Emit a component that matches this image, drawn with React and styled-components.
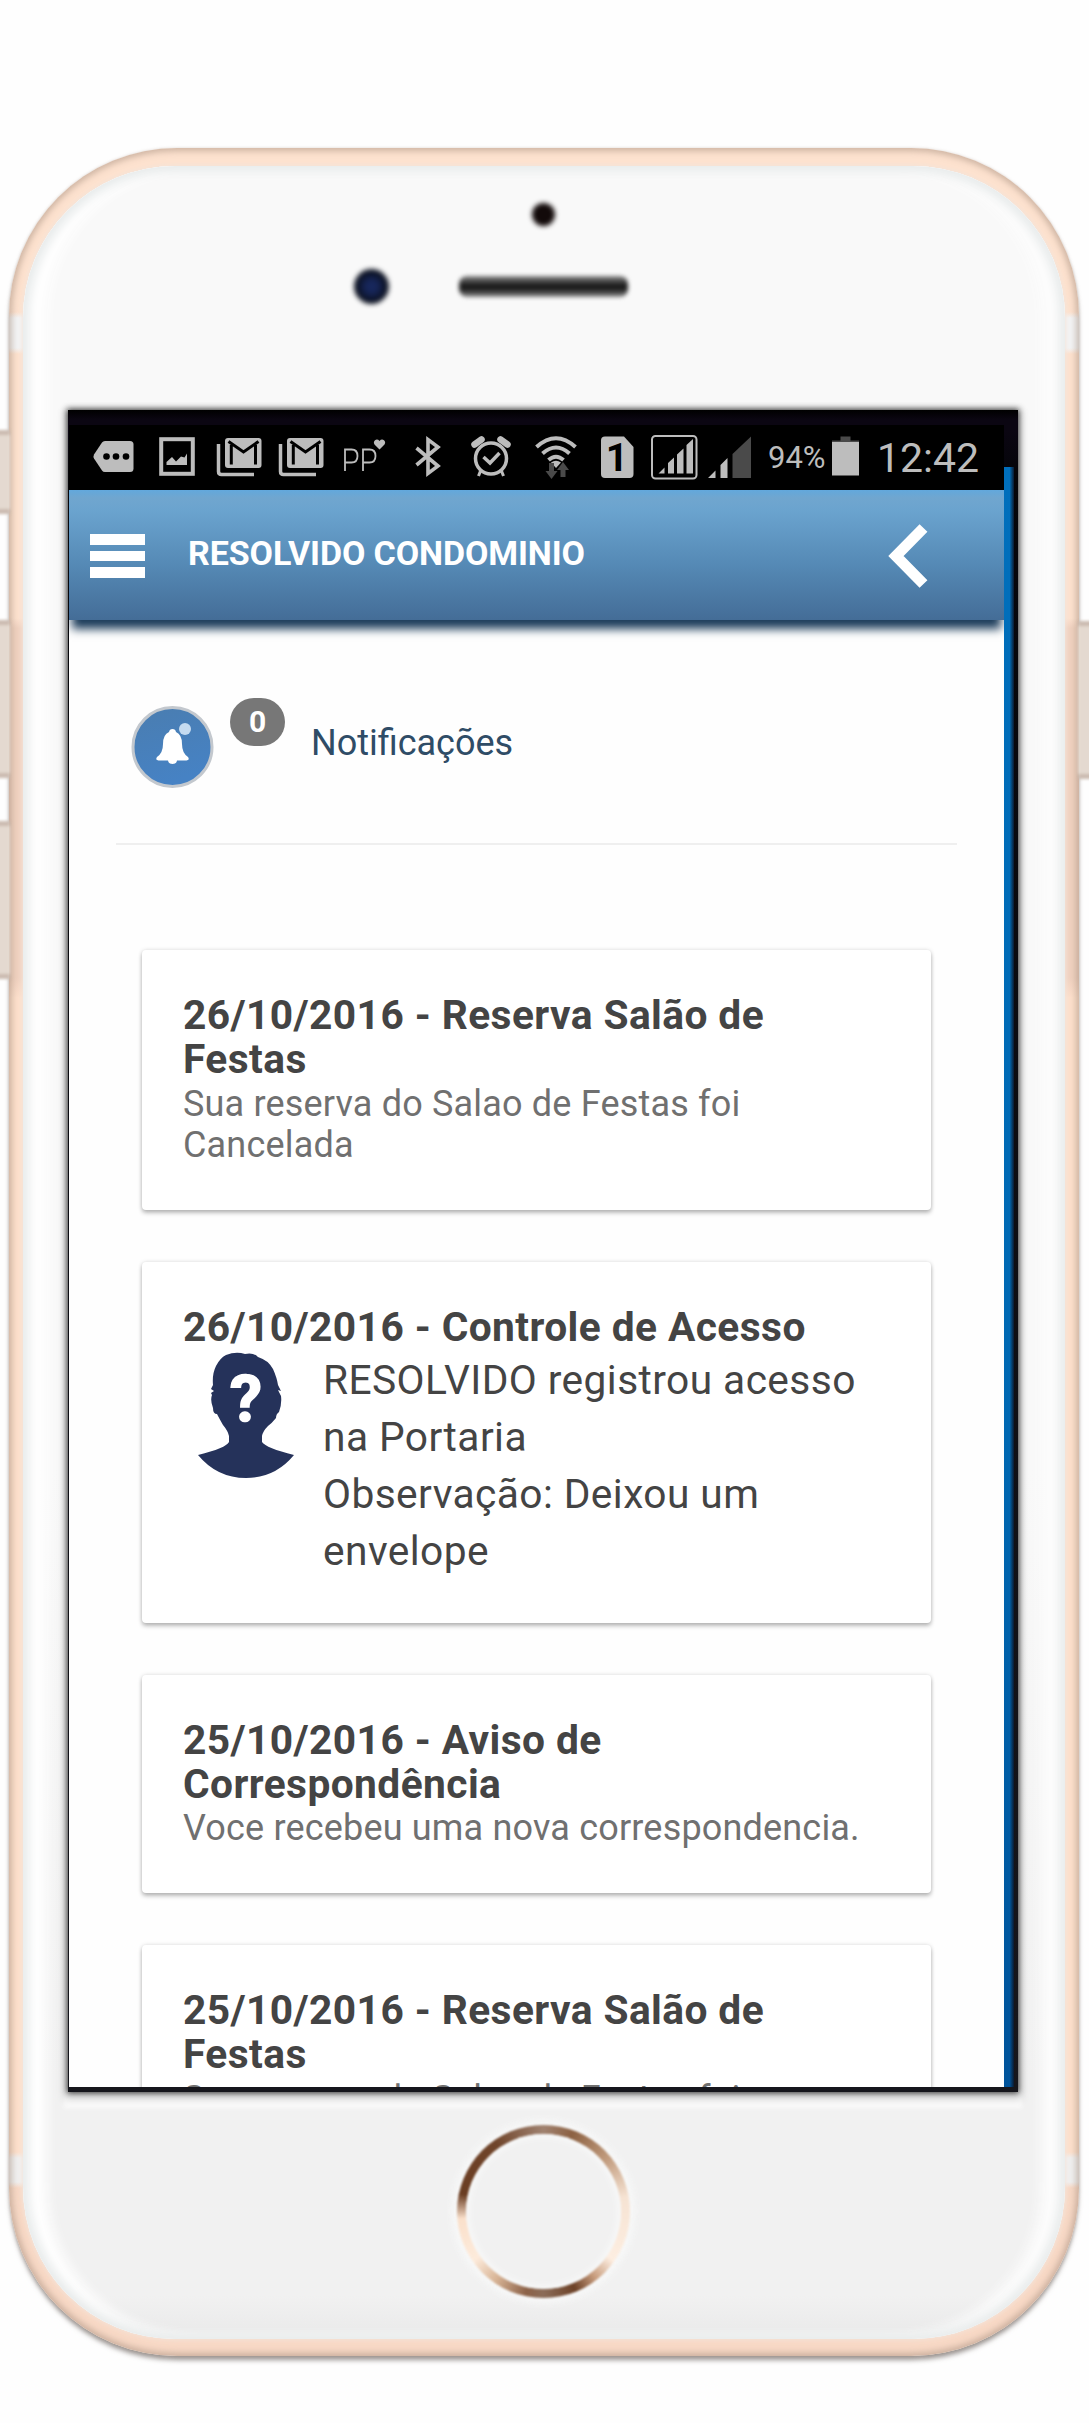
import React from "react";
import styled, { createGlobalStyle } from "styled-components";

const GlobalStyle = createGlobalStyle`
  body {
    margin: 0;
    background: #fefefe;
    font-family: Roboto, "Noto Sans", sans-serif;
  }
`;

const Page = styled.main`
  box-sizing: border-box;
  width: 1089px;
  height: 2423px;
  padding: 148px 0 0 9px;
  overflow: hidden;
`;

/* ---------- phone body ---------- */

const Shell = styled.div`
  position: relative;
  box-sizing: border-box;
  width: 1070px;
  height: 2208px;
  padding: 18px 14px 17px;
  border-radius: 168px;
  background: linear-gradient(
    #fde2cf 0 164px,
    #f3f4f5 170px 200px,
    #fde2cf 206px 470px,
    #f0d2c0 480px 830px,
    #fde0cc 850px 2004px,
    #f0f0f0 2010px 2034px,
    #f8d9c6 2040px
  );
  box-shadow:
    inset 0 0 6px 3px rgba(160, 135, 120, 0.5),
    0 0 3px rgba(170, 150, 138, 0.4),
    0 5px 5px -1px rgba(90, 80, 75, 0.6);
`;

const SideButton = styled.span`
  position: absolute;
  top: ${(p) => p.$top}px;
  ${(p) => (p.$right ? "right" : "left")}: -14px;
  width: 15px;
  height: ${(p) => p.$height}px;
  box-sizing: border-box;
  background: #e4d9d0;
  border: solid #cbbbb0;
  border-width: 5px 0;
  filter: blur(1.5px);
`;

const Face = styled.div`
  display: flex;
  flex-direction: column;
  height: 100%;
  border-radius: 152px;
  background: linear-gradient(#f9f9f9 0 60%, #f1f1f1 88% 98%, #e9e9e9);
  box-shadow:
    0 0 4px 1px #f3e4da,
    inset 0 0 8px 6px #e9ecec,
    inset 22px 0 12px 2px #fefefe,
    inset -22px 0 12px 2px #fcfcfc;
`;

const TopBezel = styled.div`
  display: flex;
  flex-direction: column;
  align-items: center;
  height: 244px;
  padding-right: 2px;
`;

const Sensor = styled.span`
  width: 23px;
  height: 23px;
  margin-top: 37px;
  border-radius: 50%;
  background: #120a0a;
  filter: blur(2.5px);
`;

const SpeakerRow = styled.div`
  display: flex;
  align-items: center;
  gap: 70px;
  width: 540px;
  margin-top: 43px;
`;

const Lens = styled.span`
  width: 35px;
  height: 35px;
  margin-left: 81px;
  border-radius: 50%;
  background: radial-gradient(circle, #17275c 0 20%, #0a0f1c 65%, #333 100%);
  filter: blur(2.5px);
`;

const Speaker = styled.span`
  width: 169px;
  height: 21px;
  border-radius: 8px;
  background: linear-gradient(#888, #1a1a1a 45% 60%, #888);
  filter: blur(2px);
`;

const BottomBezel = styled.div`
  display: flex;
  justify-content: center;
  padding: 33px 2px 0 0;
`;

const HomeButton = styled.div`
  width: 173px;
  height: 173px;
  border-radius: 50%;
  background: conic-gradient(
    #a08270 0deg,
    #8c6142 20deg,
    #c19b7d 50deg,
    #f6e3d3 80deg,
    #fdeee1 125deg,
    #c89d7e 142deg,
    #6c4127 158deg,
    #8b6c58 180deg,
    #8c6248 192deg,
    #d8b496 215deg,
    #fdebdb 235deg,
    #fae0cb 265deg,
    #6a3d22 282deg,
    #70452b 325deg,
    #a08270 360deg
  );
  box-shadow: 0 0 8px 4px #f9fafa;
  filter: blur(1.2px);
`;

const HomeWell = styled.div`
  width: 155px;
  height: 155px;
  margin: 9px;
  border-radius: 50%;
  background: #f1f1f1;
  box-shadow: inset 0 0 6px 3px #f8f9f9;
`;

/* ---------- display ---------- */

const Display = styled.div`
  display: flex;
  align-items: flex-start;
  box-sizing: border-box;
  width: 950px;
  height: 1682px;
  margin-left: 45px;
  padding: 15px 0 0 1px;
  background: linear-gradient(#000, #0b0612 10px, #0b0612 20px, #05050a 60px, #16161c);
  box-shadow:
    0 0 6px 1px rgba(20, 20, 20, 0.85),
    0 4px 8px 4px rgba(0, 0, 0, 0.12),
    0 12px 4px 4px #fbfbfb;
`;

const Viewport = styled.div`
  display: flex;
  flex-direction: column;
  width: 935px;
  height: 1662px;
  overflow: hidden;
  background: #fefefe;
`;

const EdgeStripe = styled.span`
  width: 10px;
  height: 1620px;
  margin-top: 42px;
  background: linear-gradient(90deg, transparent 55%, #0a1a30), linear-gradient(#006fbc, #0068b2 60%, #00539a);
`;

const StatusBar = styled.div`
  display: flex;
  align-items: center;
  flex: none;
  height: 65px;
  background: #000;
  color: #bdbdbd;
`;

const StatusIcon = styled.svg`
  flex: none;
  display: block;
  width: ${(p) => p.$w}px;
  height: 46px;
  margin-left: ${(p) => p.$gap}px;
  overflow: visible;
`;

const StatusText = styled.span`
  flex: none;
  width: ${(p) => p.$w}px;
  margin-left: ${(p) => p.$gap}px;
  font-size: ${(p) => p.$size}px;
  line-height: 46px;
  white-space: nowrap;
`;

const Header = styled.header`
  position: relative;
  display: flex;
  align-items: center;
  flex: none;
  box-sizing: border-box;
  height: 130px;
  padding: 2px 76px 0 21px;
  background: linear-gradient(#62a8dc 0, #70a6cf 8px, #6aa3ce 22px, #5589b5 75px, #446d97);
  box-shadow: 0 12px 9px -3px #1d3d5b;
`;

const MenuButton = styled.button`
  display: flex;
  flex-direction: column;
  gap: 6px;
  width: 55px;
  padding: 0;
  border: 0;
  background: none;
`;

const MenuBar = styled.span`
  height: 10.5px;
  background: #fff;
`;

const AppTitle = styled.h1`
  flex: 1;
  margin: -7px 0 0 43px;
  color: #fff;
  font-size: 34px;
  font-weight: 700;
  line-height: 44px;
  letter-spacing: -0.1px;
  white-space: nowrap;
`;

const BackIcon = styled.svg`
  display: block;
  width: 40px;
  height: 66px;
`;

const Content = styled.section`
  display: flex;
  flex-direction: column;
  padding: 0 47px;
`;

const Notifications = styled.div`
  display: flex;
  align-items: flex-start;
  box-sizing: border-box;
  height: 225px;
  padding: 78px 0 0 15px;
  border-bottom: 2px solid #efefef;
`;

const BellIcon = styled.svg`
  width: 84px;
  height: 84px;
  margin-top: 7px;
`;

const Badge = styled.span`
  width: 55px;
  height: 48px;
  margin-left: 15px;
  border-radius: 24px;
  background: #777;
  color: #fff;
  font-size: 30px;
  font-weight: 700;
  line-height: 47px;
  text-align: center;
`;

const SectionName = styled.span`
  margin: 23px 0 0 26px;
  color: #2f4c66;
  font-size: 36px;
  line-height: 44px;
`;

const CardList = styled.div`
  display: flex;
  flex-direction: column;
  gap: 52px;
  padding: 105px 26px 0;
`;

const Card = styled.article`
  box-sizing: border-box;
  padding: 43px 42px 43px 41px;
  border-radius: 4px;
  background: #fff;
  box-shadow:
    0 3px 4px rgba(0, 0, 0, 0.25),
    0 0 4px rgba(0, 0, 0, 0.13);
`;

const CardTitle = styled.h2`
  margin: 0;
  color: #444;
  font-size: 40.7px;
  font-weight: 700;
  line-height: 44px;
  letter-spacing: 0.42px;
`;

const CardText = styled.p`
  margin: 2.500px 0 0;
  color: #707070;
  font-size: 36px;
  line-height: 41.7px;
  letter-spacing: 0.18px;
`;

const AccessRow = styled.div`
  display: flex;
  padding-top: 3px;
`;

const Avatar = styled.svg`
  flex: none;
  width: 96px;
  height: 127px;
  margin: 0 29px 0 15px;
`;

const AccessText = styled.p`
  margin: 0;
  color: #444;
  font-size: 40.7px;
  line-height: 57px;
  letter-spacing: 0.42px;
  white-space: nowrap;
`;

const GREY = "#bdbdbd";

function MailStackIcon({ gap }) {
  return (
    <StatusIcon $w={45} $gap={gap} viewBox="0 0 45 46">
      <path d="M1.500 9v27.500q0 3 3 3H37" fill="none" stroke={GREY} strokeWidth="3.500" />
      <rect x="8" y="3" width="36.500" height="30" rx="3" fill={GREY} />
      <path d="M11.500 6.500l15 10.500 15-10.500M14.300 10v19.500M38.500 10v19.500" fill="none" stroke="#000" strokeWidth="3" />
    </StatusIcon>
  );
}

function StatusIcons() {
  return (
    <>
      <StatusIcon $w={41} $gap={24} viewBox="0 0 41 46">
        <path d="M12 6h25q3.500 0 3.500 3.500v24q0 3.500-3.500 3.500H12q-2 0-3-1.500L1 23.500q-1-2 0-4L9 7.500Q10 6 12 6z" fill={GREY} />
        <circle cx="13.500" cy="21.500" r="3.300" />
        <circle cx="23" cy="21.500" r="3.300" />
        <circle cx="33" cy="21.500" r="3.300" />
      </StatusIcon>
      <StatusIcon $w={36} $gap={25} viewBox="0 0 36 46">
        <rect x="2.200" y="4.200" width="31.600" height="34.600" fill="none" stroke={GREY} strokeWidth="4" />
        <path d="M7.500 30v-3l5.500-5 4 4.500 5-5 3.500 1 2.500-4V30z" fill={GREY} />
      </StatusIcon>
      <MailStackIcon gap={22} />
      <MailStackIcon gap={17} />
      <StatusIcon $w={43} $gap={19} viewBox="0 0 43 46">
        <path
          d="M2 36V14.500h6.500q6 0 6 6.500t-6 6.500H2M20 36V14.500h6.500q6 0 6 6.500t-6 6.500H20"
          fill="none"
          stroke={GREY}
          strokeWidth="1.800"
        />
        <path d="M36.500 14.500l-5-5q-1.500-2.500.500-4.300 2.500-1.500 4.500.8 2-2.300 4.500-.8 2 1.800.5 4.300z" fill={GREY} />
      </StatusIcon>
      <StatusIcon $w={27} $gap={29} viewBox="0 0 27 46">
        <path d="M1.500 13L23 31 13 38.500V4.500L23 12 1.500 30" fill="none" stroke={GREY} strokeWidth="3.600" strokeLinejoin="miter" />
      </StatusIcon>
      <StatusIcon $w={40} $gap={29} viewBox="0 0 40 46">
        <circle cx="20" cy="23.500" r="15.500" fill="none" stroke={GREY} strokeWidth="3.500" />
        <path d="M12.500 22l6.500 6 9.500-10" fill="none" stroke={GREY} strokeWidth="3.500" />
        <path d="M3.500 9.500l7-5M36.500 9.500l-7-5" stroke={GREY} strokeWidth="6.500" strokeLinecap="round" />
        <path d="M9.500 36L7.500 41M30.500 36l2 5" stroke={GREY} strokeWidth="3" />
      </StatusIcon>
      <StatusIcon $w={42} $gap={24} viewBox="0 0 42 46">
        <g fill="none" stroke={GREY} strokeWidth="4">
          <path d="M1.500 12Q21-5.500 40.500 12" />
          <path d="M7.500 18.500q13.500-12 27 0" />
          <path d="M13.500 25q7.500-6.500 15 0" />
        </g>
        <path d="M16 27.500q5-3.500 10 0L21 33z" fill={GREY} />
        <path d="M14 28h5v8h3.500l-6 8-6-8H14zM25.500 42v-7H22l6-8 6 8h-3.500v7z" fill="#4a4a4a" />
      </StatusIcon>
      <StatusIcon $w={33} $gap={23.5} viewBox="0 0 33 46">
        <path d="M4 1.500h19L32.500 12v27q0 4-4 4H4q-4 0-4-4V5.500q0-4 4-4z" fill={GREY} />
        <text x="16" y="36" textAnchor="middle" fontFamily="Roboto, sans-serif" fontWeight="700" fontSize="39" fill="#000">
          1
        </text>
      </StatusIcon>
      <StatusIcon $w={47} $gap={17.5} viewBox="0 0 47 46">
        <rect x="1" y="1" width="44.500" height="42.500" rx="3.500" fill="none" stroke={GREY} strokeWidth="2" />
        <path d="M7.500 38.500l6-6v6zM17 38.500V28l6-5.500v16zM26 38.500V19.500l6.500-6v25zM35.500 38.500V10l6.500-6v34.500z" fill={GREY} />
      </StatusIcon>
      <StatusIcon $w={43} $gap={10} viewBox="0 0 43 46">
        <path d="M0 43l7.500-7.500V43zM12.500 43V30l7-7v20z" fill={GREY} />
        <path d="M24.500 43V19L43 1.500V43z" fill="#4a4a4a" />
      </StatusIcon>
      <StatusText $w={57} $gap={17} $size={31}>94%</StatusText>
      <StatusIcon $w={27} $gap={7} viewBox="0 0 27 46">
        <path d="M8.500 1.500h10v4h8.500v3H0v-3h8.500z" fill="#4a4a4a" />
        <rect y="7" width="27" height="33.500" fill={GREY} />
      </StatusIcon>
      <StatusText $w={102} $gap={18} $size={41}>12:42</StatusText>
    </>
  );
}

function Bell() {
  return (
    <BellIcon viewBox="0 0 84 84">
      <defs>
        <linearGradient id="bellFill" x1="0" y1="0" x2="0.300" y2="1">
          <stop offset="0" stopColor="#4a7db0" />
          <stop offset="1" stopColor="#4682c4" />
        </linearGradient>
      </defs>
      <circle cx="41.500" cy="42" r="39.500" fill="url(#bellFill)" stroke="#c3c8ce" strokeWidth="3" />
      <path
        d="M41.500 24q3 0 3.500 3 6 2.500 6 12 0 9 6 13 2 3-1.500 3.500H46q-.5 3.500-4.500 3.500t-4.500-3.500h-9.500Q24 55 26 52q6-4 6-13 0-9.500 6-12 .5-3 3.500-3z"
        fill="#fff"
      />
      <circle cx="54" cy="24" r="6" fill="#c5dbf0" />
    </BellIcon>
  );
}

function UnknownPerson() {
  return (
    <Avatar viewBox="0 0 96 127">
      <path
        d="M28 3Q38-1 47 2 55 0 60 5q10 3 15 12 4 9 5 16l3 6-3-1 3 6q1 8-2 16-3 2-3 6-4 5-8 8-5 5-6 10v6q4 6 32 13-19 23-48 23T0 103q28-7 31-13v-6q-1-5-6-11-4-7-6-11-4 0-4-6-3-8-1-13l-1-2 3-2-3-2 2-4q-1-11 3-19 4-8 10-11z"
        fill="#25325a"
      />
      <text
        x="48"
        y="69"
        textAnchor="middle"
        fontFamily="Roboto, sans-serif"
        fontWeight="700"
        fontSize="65"
        fill="#fff"
        stroke="#fff"
        strokeWidth="1.500"
      >
        ?
      </text>
    </Avatar>
  );
}

function NoticeCard({ date, title, children }) {
  return (
    <Card>
      <CardTitle>
        {date} - {title}
      </CardTitle>
      {children}
    </Card>
  );
}

export default function App() {
  return (
    <Page>
      <GlobalStyle />
      <Shell>
        <SideButton $top={282} $height={84} />
        <SideButton $top={472} $height={158} />
        <SideButton $top={673} $height={158} />
        <SideButton $top={473} $height={158} $right />
        <Face>
          <TopBezel>
            <Sensor />
            <SpeakerRow>
              <Lens />
              <Speaker />
            </SpeakerRow>
          </TopBezel>
          <Display>
            <Viewport>
              <StatusBar>
                <StatusIcons />
              </StatusBar>
              <Header>
                <MenuButton aria-label="Menu">
                  <MenuBar />
                  <MenuBar />
                  <MenuBar />
                </MenuButton>
                <AppTitle>RESOLVIDO CONDOMINIO</AppTitle>
                <BackIcon viewBox="0 0 40 66">
                  <path d="M35.500 5L8 33l27.500 28" fill="none" stroke="#fff" strokeWidth="11" />
                </BackIcon>
              </Header>
              <Content>
                <Notifications>
                  <Bell />
                  <Badge>0</Badge>
                  <SectionName>Notificações</SectionName>
                </Notifications>
                <CardList>
                  <NoticeCard date="26/10/2016" title="Reserva Salão de Festas">
                    <CardText>Sua reserva do Salao de Festas foi Cancelada</CardText>
                  </NoticeCard>
                  <NoticeCard date="26/10/2016" title="Controle de Acesso">
                    <AccessRow>
                      <UnknownPerson />
                      <AccessText>
                        RESOLVIDO registrou acesso
                        <br />
                        na Portaria
                        <br />
                        Observação: Deixou um
                        <br />
                        envelope
                      </AccessText>
                    </AccessRow>
                  </NoticeCard>
                  <NoticeCard date="25/10/2016" title="Aviso de Correspondência">
                    <CardText>Voce recebeu uma nova correspondencia.</CardText>
                  </NoticeCard>
                  <NoticeCard date="25/10/2016" title="Reserva Salão de Festas">
                    <CardText>Sua reserva do Salao de Festas foi Cancelada</CardText>
                  </NoticeCard>
                </CardList>
              </Content>
            </Viewport>
            <EdgeStripe />
          </Display>
          <BottomBezel>
            <HomeButton>
              <HomeWell />
            </HomeButton>
          </BottomBezel>
        </Face>
      </Shell>
    </Page>
  );
}
